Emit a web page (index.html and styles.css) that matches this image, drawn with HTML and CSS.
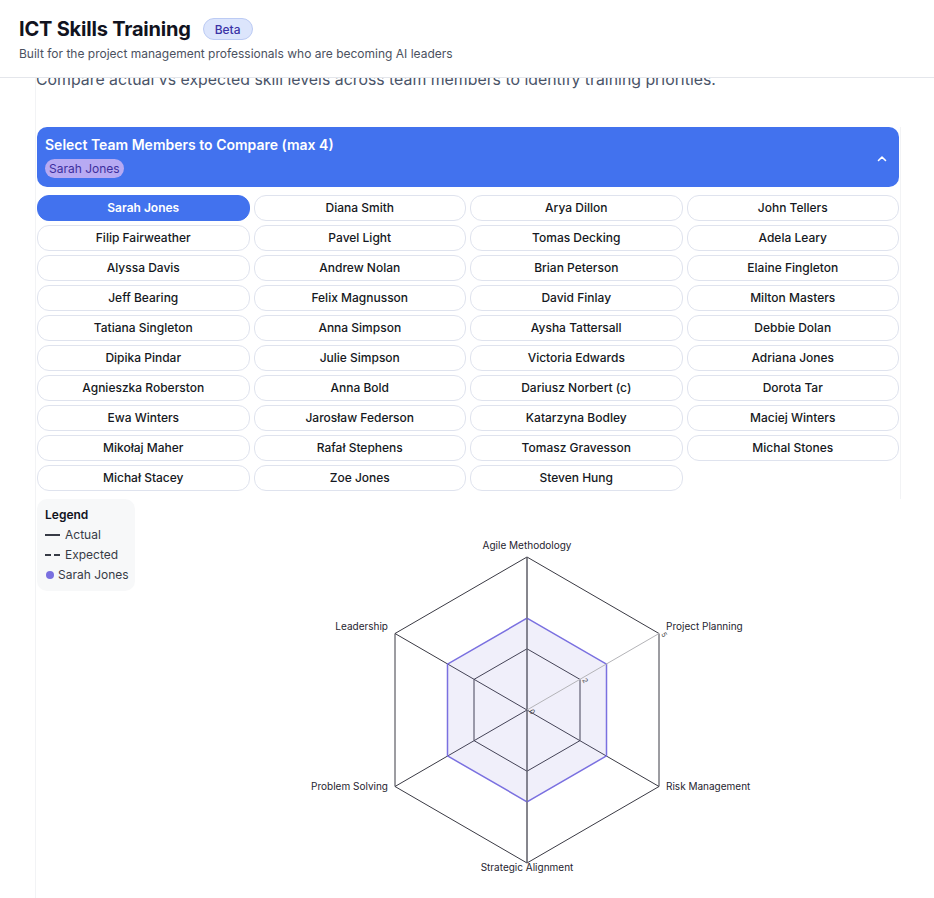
FILE: index.html
```html
<!DOCTYPE html>
<html lang="en">
<head>
<meta charset="utf-8">
<title>ICT Skills Training</title>
<link rel="stylesheet" href="styles.css">
</head>
<body>
<header class="topbar">
  <div class="title-row">
    <h1 class="title">ICT Skills Training</h1>
    <span class="badge">Beta</span>
  </div>
  <p class="subtitle">Built for the project management professionals who are becoming AI leaders</p>
</header>
<main class="main">
  <div class="workspace">
    <p class="intro">Compare actual vs expected skill levels across team members to identify training priorities.</p>
    <section class="selector">
      <div class="panel">
        <div class="panel-text">
          <div class="panel-title">Select Team Members to Compare (max 4)</div>
          <div class="chips"><span class="chip">Sarah Jones</span></div>
        </div>
        <svg class="chevron" width="10" height="10" viewBox="0 0 10 10"><polyline points="1.5,6.5 5,3 8.5,6.5" fill="none" stroke="#fff" stroke-width="1.6" stroke-linecap="round" stroke-linejoin="round"/></svg>
      </div>
      <div class="members">
        <button class="member selected">Sarah Jones</button>
        <button class="member">Diana Smith</button>
        <button class="member">Arya Dillon</button>
        <button class="member">John Tellers</button>
        <button class="member">Filip Fairweather</button>
        <button class="member">Pavel Light</button>
        <button class="member">Tomas Decking</button>
        <button class="member">Adela Leary</button>
        <button class="member">Alyssa Davis</button>
        <button class="member">Andrew Nolan</button>
        <button class="member">Brian Peterson</button>
        <button class="member">Elaine Fingleton</button>
        <button class="member">Jeff Bearing</button>
        <button class="member">Felix Magnusson</button>
        <button class="member">David Finlay</button>
        <button class="member">Milton Masters</button>
        <button class="member">Tatiana Singleton</button>
        <button class="member">Anna Simpson</button>
        <button class="member">Aysha Tattersall</button>
        <button class="member">Debbie Dolan</button>
        <button class="member">Dipika Pindar</button>
        <button class="member">Julie Simpson</button>
        <button class="member">Victoria Edwards</button>
        <button class="member">Adriana Jones</button>
        <button class="member">Agnieszka Roberston</button>
        <button class="member">Anna Bold</button>
        <button class="member">Dariusz Norbert (c)</button>
        <button class="member">Dorota Tar</button>
        <button class="member">Ewa Winters</button>
        <button class="member">Jarosław Federson</button>
        <button class="member">Katarzyna Bodley</button>
        <button class="member">Maciej Winters</button>
        <button class="member">Mikołaj Maher</button>
        <button class="member">Rafał Stephens</button>
        <button class="member">Tomasz Gravesson</button>
        <button class="member">Michal Stones</button>
        <button class="member">Michał Stacey</button>
        <button class="member">Zoe Jones</button>
        <button class="member">Steven Hung</button>
      </div>
    </section>
    <section class="chart-row">
      <div class="legend">
        <div class="legend-title">Legend</div>
        <div class="legend-item"><span class="line-solid"></span>Actual</div>
        <div class="legend-item"><span class="line-dashed"><i></i><i></i></span>Expected</div>
        <div class="legend-item"><span class="dot"></span>Sarah Jones</div>
      </div>
      <div class="chart">
        <svg class="radar" width="744" height="400" viewBox="0 0 744 400">
          <g class="grid" fill="none" stroke="#3a3a44" stroke-width="1">
            <polygon points="372,58 504,134.5 504,287.5 372,364 240,287.5 240,134.5"/>
            <polygon points="372,149.8 425,180.4 425,241.6 372,272.2 319,241.6 319,180.4"/>
          </g>
          <g class="spokes" stroke="#3a3a44" stroke-width="1">
            <line x1="372" y1="211" x2="372" y2="58"/>
            <line x1="372" y1="211" x2="372" y2="364"/>
            <line x1="372" y1="211" x2="240" y2="134.5"/>
            <line x1="372" y1="211" x2="504" y2="287.5"/>
            <line x1="372" y1="211" x2="240" y2="287.5"/>
          </g>
          <polygon points="372,119.2 451.5,165.1 451.5,256.9 372,302.8 292.5,256.9 292.5,165.1" fill="#8884d8" fill-opacity="0.13" stroke="#7a70e0" stroke-width="1.5"/>
          <g class="spokes-over" stroke="#6e6e78" stroke-width="1">
            <line x1="372" y1="211" x2="372" y2="58"/>
            <line x1="372" y1="211" x2="372" y2="364"/>
          </g>
          <line x1="372" y1="211" x2="504" y2="134.5" stroke="#b4b4b8" stroke-width="1"/>
          <g class="ticks" font-size="7" fill="#444">
            <text x="374" y="212" transform="rotate(60 374 212)">0</text>
            <text x="427" y="181" transform="rotate(60 427 181)">2</text>
            <text x="506" y="135" transform="rotate(60 506 135)">5</text>
          </g>
          <g class="labels" font-size="10" fill="#1f2430">
            <text x="372" y="50" text-anchor="middle">Agile Methodology</text>
            <text x="511" y="131" text-anchor="start">Project Planning</text>
            <text x="511" y="291" text-anchor="start">Risk Management</text>
            <text x="372" y="372" text-anchor="middle">Strategic Alignment</text>
            <text x="233" y="291" text-anchor="end">Problem Solving</text>
            <text x="233" y="131" text-anchor="end">Leadership</text>
          </g>
        </svg>
      </div>
    </section>
  </div>
</main>
</body>
</html>
```
FILE: styles.css
```css
* { box-sizing: border-box; }
html, body { margin: 0; padding: 0; background: #ffffff; }
body {
  font-family: Inter, "Noto Sans", "Liberation Sans", sans-serif;
  color: #111827;
  height: 898px;
  overflow: hidden;
}
.topbar {
  position: relative;
  z-index: 2;
  background: #ffffff;
  border-bottom: 1px solid #e4e6eb;
  padding: 15px 19px 14px;
}
.title-row {
  display: flex;
  align-items: center;
  gap: 12px;
  height: 28px;
}
.title {
  margin: 0;
  font-size: 20px;
  font-weight: 700;
  letter-spacing: -0.2px;
  line-height: 28px;
  color: #111320;
}
.badge {
  display: inline-flex;
  align-items: center;
  height: 22px;
  padding: 0 11px;
  border-radius: 11px;
  background: #dce5fc;
  border: 1px solid #bccbf4;
  color: #3b33a6;
  font-size: 12px;
  font-weight: 500;
}
.subtitle {
  margin: 2px 0 0 0;
  font-size: 12px;
  line-height: 18px;
  color: #4b5160;
}
.main {
  overflow: hidden;
}
.workspace {
  margin-left: 35px;
  width: 866px;
  border-left: 1px solid #f2f3f5;
}
.intro {
  margin: -10px 0 0 0;
  font-size: 15.85px;
  line-height: 24px;
  color: #4a5468;
}
.selector {
  margin-top: 35px;
  padding: 0 1px 8px 1px;
  border-right: 1px solid #f2f3f5;
}
.panel {
  display: flex;
  align-items: center;
  justify-content: space-between;
  background: #4272ee;
  border-radius: 10px;
  padding: 8px 12px 9px 8px;
  height: 60px;
}
.panel-title {
  color: #ffffff;
  font-size: 14px;
  font-weight: 600;
  line-height: 20px;
}
.chips {
  margin-top: 4px;
  display: flex;
  gap: 4px;
}
.chip {
  display: inline-flex;
  align-items: center;
  height: 19px;
  padding: 0 4px;
  border-radius: 10px;
  background: #b7aaf3;
  color: #3d2f9e;
  font-size: 12px;
  line-height: 19px;
}
.chevron { margin-top: 4px; }
.members {
  margin-top: 8px;
  display: grid;
  grid-template-columns: repeat(4, 1fr);
  grid-auto-rows: 26px;
  gap: 4px;
}
.member {
  font-family: inherit;
  font-size: 12px;
  font-weight: 500;
  color: #151822;
  background: #ffffff;
  border: 1px solid #dfe3ee;
  border-radius: 12px;
  padding: 0;
  line-height: 24px;
  text-align: center;
}
.member.selected {
  background: #4272ee;
  border-color: #4272ee;
  color: #ffffff;
  font-weight: 600;
}
.chart-row {
  display: flex;
  gap: 20px;
  padding-left: 1px;
}
.legend {
  width: 98px;
  height: 92px;
  flex: none;
  background: #f7f8f9;
  border-radius: 10px;
  padding: 6px 8px;
}
.legend-title {
  font-size: 12px;
  font-weight: 600;
  line-height: 20px;
  color: #111320;
}
.legend-item {
  display: flex;
  align-items: center;
  gap: 5px;
  font-size: 12px;
  line-height: 20px;
  color: #373b46;
  white-space: nowrap;
}
.line-solid {
  width: 15px;
  height: 2px;
  background: #373b46;
}
.line-dashed {
  width: 15px;
  display: flex;
  justify-content: space-between;
}
.line-dashed i {
  display: block;
  width: 6px;
  height: 2px;
  background: #373b46;
}
.dot {
  flex: none;
  width: 8px;
  height: 8px;
  border-radius: 50%;
  background: #7a70e0;
  margin-left: 1px;
  margin-right: -1px;
}
.chart {
  flex: 1;
  height: 400px;
}
.radar {
  display: block;
  font-family: Inter, "Noto Sans", "Liberation Sans", sans-serif;
}
```
